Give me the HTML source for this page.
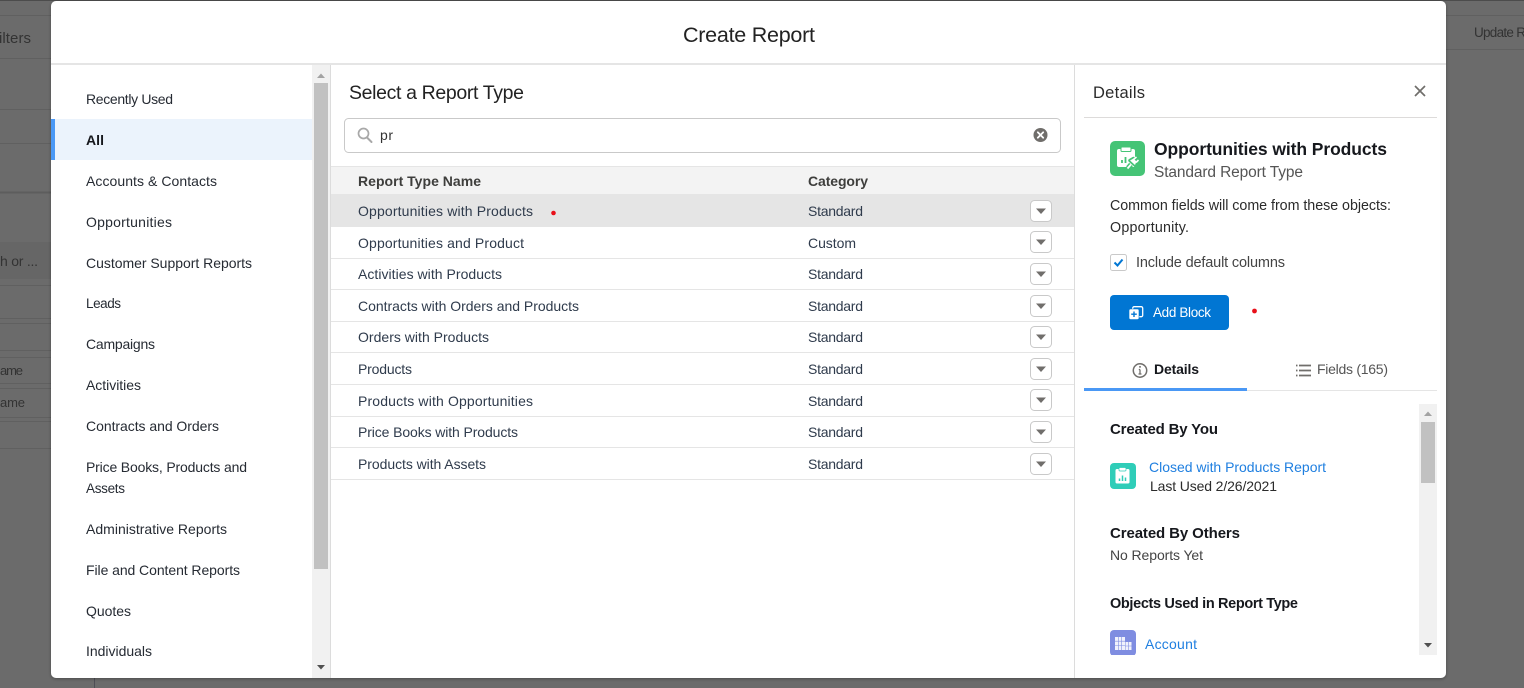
<!DOCTYPE html>
<html>
<head>
<meta charset="utf-8">
<title>Create Report</title>
<style>
html,body{margin:0;padding:0;width:1524px;height:688px;overflow:hidden;background:#6b6b6b}
svg{display:block}
text{font-family:"Liberation Sans",Arial,sans-serif;font-size:14px;fill:#2b2b2b;white-space:pre}
.b{font-weight:700}
.row{fill:#2f3b4c}
.nav{fill:#262b33}
.bg{fill:#333;font-size:14px}
.lnk{fill:#1f7fe0}
</style>
</head>
<body>
<svg width="1524" height="688" viewBox="0 0 1524 688" xmlns="http://www.w3.org/2000/svg">
<defs>
<clipPath id="acc"><rect x="1100" y="625" width="50" height="30"/></clipPath>
<filter id="sh" x="-5%" y="-5%" width="110%" height="110%"><feDropShadow dx="0" dy="1" stdDeviation="1.5" flood-color="#000" flood-opacity=".3"/></filter>
<g id="dd"><rect x=".5" y=".5" width="21" height="21" rx="4" fill="#fff" stroke="#c9c9c9"/><path d="M6 8.500h10l-5 5.500z" fill="#706e6b"/></g>
</defs>

<!-- dimmed background -->
<rect width="1524" height="688" fill="#6b6b6b"/>
<g stroke="#606060" stroke-width="1">
<path d="M0 15.500H51M0 58.500H51M0 109.500H51M0 143.500H51M0 285.500H51M0 318.500H51M0 323.500H51M0 350.500H51M0 357.500H51M0 383.500H51M0 388.500H51M0 417.500H51M0 421.500H51M0 448.500H51"/>
<path d="M1446 15.500H1524M1446 49.500H1524"/>
<path d="M94.500 678V688" stroke="#4e4e55"/>
</g>
<path d="M0 192.500H51" stroke="#5d5d5d" stroke-width="2"/>
<rect x="0" y="242" width="51" height="37" fill="#666"/>
<path d="M0 .5H1524" stroke="#4c4c4c"/>
<text class="bg" x="-1" y="43" textLength="32" style="font-size:15px">ilters</text>
<text class="bg" x="0" y="266" textLength="38">h or ...</text>
<text class="bg" x="0" y="375" textLength="23" style="font-size:13px">ame</text>
<text class="bg" x="0" y="407" textLength="25" style="font-size:13px">ame</text>
<text class="bg" x="1474" y="37" textLength="52" style="font-size:13.500px">Update R</text>

<!-- modal -->
<rect x="51" y="1" width="1395" height="677" rx="5" fill="#fff" filter="url(#sh)"/>
<rect x="51" y="63" width="1395" height="2" fill="#e5e5e5"/>
<text x="683" y="42" style="font-size:21.500px;fill:#222" textLength="132">Create Report</text>

<!-- sidebar -->
<rect x="51" y="119" width="261" height="41" fill="#ebf3fc"/>
<rect x="51" y="119" width="4" height="41" fill="#4a98f5"/>
<rect x="312" y="65" width="18" height="613" fill="#f1f1f1"/>
<rect x="314" y="83" width="14" height="486" fill="#c1c1c1"/>
<path d="M317 78h8l-4-4.500z" fill="#a3a3a3"/>
<path d="M317 665h8l-4 4.500z" fill="#505050"/>
<rect x="330" y="65" width="1" height="613" fill="#dcdcdc"/>
<text class="nav" x="86" y="104" textLength="87">Recently Used</text>
<text class="nav b" x="86" y="145" textLength="18" style="fill:#16181d">All</text>
<text class="nav" x="86" y="186" textLength="131">Accounts &amp; Contacts</text>
<text class="nav" x="86" y="227" textLength="86">Opportunities</text>
<text class="nav" x="86" y="268" textLength="166">Customer Support Reports</text>
<text class="nav" x="86" y="308" textLength="35" style="font-size:13.500px">Leads</text>
<text class="nav" x="86" y="349" textLength="69">Campaigns</text>
<text class="nav" x="86" y="390" textLength="55">Activities</text>
<text class="nav" x="86" y="431" textLength="133">Contracts and Orders</text>
<text class="nav" x="86" y="472" textLength="161">Price Books, Products and</text>
<text class="nav" x="86" y="493" textLength="39" style="font-size:13.500px">Assets</text>
<text class="nav" x="86" y="534" textLength="141">Administrative Reports</text>
<text class="nav" x="86" y="575" textLength="154">File and Content Reports</text>
<text class="nav" x="86" y="616" textLength="45">Quotes</text>
<text class="nav" x="86" y="656" textLength="66">Individuals</text>

<!-- middle -->
<rect x="1074" y="65" width="1" height="613" fill="#dcdcdc"/>
<text x="349" y="99" style="font-size:19.500px;fill:#222" textLength="175">Select a Report Type</text>
<rect x="344.500" y="118.500" width="716" height="34" rx="4" fill="#fff" stroke="#c9c9c9"/>
<circle cx="363.500" cy="133.500" r="5" fill="none" stroke="#a8a8a8" stroke-width="1.700"/>
<path d="M367 137.500l4.500 4.500" stroke="#a8a8a8" stroke-width="2" stroke-linecap="round"/>
<text x="380" y="140" textLength="13" style="fill:#333">pr</text>
<circle cx="1040.500" cy="135" r="7" fill="#706e6b"/>
<path d="M1037.800 132.300l5.400 5.400M1043.200 132.300l-5.400 5.400" stroke="#fff" stroke-width="1.800" stroke-linecap="round"/>

<rect x="331" y="166" width="743" height="28" fill="#f3f3f3"/>
<rect x="331" y="166" width="743" height="1" fill="#e5e5e5"/>
<rect x="331" y="194" width="743" height="33" fill="#e5e5e5"/>
<g fill="#e5e5e5">
<rect x="331" y="258" width="743" height="1"/><rect x="331" y="289" width="743" height="1"/>
<rect x="331" y="321" width="743" height="1"/><rect x="331" y="352" width="743" height="1"/>
<rect x="331" y="384" width="743" height="1"/><rect x="331" y="416" width="743" height="1"/>
<rect x="331" y="447" width="743" height="1"/><rect x="331" y="479" width="743" height="1"/>
</g>
<text class="b" x="358" y="186" textLength="123" style="fill:#3e3e3c">Report Type Name</text>
<text class="b" x="808" y="186" textLength="60" style="fill:#3e3e3c">Category</text>

<text class="row" x="358" y="216" textLength="175">Opportunities with Products</text>
<text class="row" x="358" y="248" textLength="166">Opportunities and Product</text>
<text class="row" x="358" y="279" textLength="144">Activities with Products</text>
<text class="row" x="358" y="311" textLength="221">Contracts with Orders and Products</text>
<text class="row" x="358" y="342" textLength="131">Orders with Products</text>
<text class="row" x="358" y="374" textLength="54">Products</text>
<text class="row" x="358" y="406" textLength="175">Products with Opportunities</text>
<text class="row" x="358" y="437" textLength="160">Price Books with Products</text>
<text class="row" x="358" y="469" textLength="128">Products with Assets</text>
<circle cx="553.500" cy="213" r="2.300" fill="#e8101a"/>

<text class="row" x="808" y="216" textLength="55">Standard</text>
<text class="row" x="808" y="248" textLength="48">Custom</text>
<text class="row" x="808" y="279" textLength="55">Standard</text>
<text class="row" x="808" y="311" textLength="55">Standard</text>
<text class="row" x="808" y="342" textLength="55">Standard</text>
<text class="row" x="808" y="374" textLength="55">Standard</text>
<text class="row" x="808" y="406" textLength="55">Standard</text>
<text class="row" x="808" y="437" textLength="55">Standard</text>
<text class="row" x="808" y="469" textLength="55">Standard</text>

<use href="#dd" x="1030" y="200"/><use href="#dd" x="1030" y="231"/><use href="#dd" x="1030" y="263"/>
<use href="#dd" x="1030" y="295"/><use href="#dd" x="1030" y="326"/><use href="#dd" x="1030" y="358"/>
<use href="#dd" x="1030" y="389"/><use href="#dd" x="1030" y="421"/><use href="#dd" x="1030" y="453"/>

<!-- details panel -->
<text x="1093" y="98" style="font-size:16.500px;fill:#2b2b2b" textLength="52">Details</text>
<path d="M1415 86l10 10M1425 86l-10 10" stroke="#706e6b" stroke-width="1.700"/>
<rect x="1084" y="117" width="353" height="1" fill="#dddbda"/>

<!-- green clipboard + plug icon -->
<rect x="1110" y="141" width="35" height="35" rx="5" fill="#45c476"/>
<rect x="1117" y="149" width="18" height="18" rx="2" fill="#fff"/>
<rect x="1121" y="147" width="10" height="4.500" rx="1" fill="#fff" stroke="#45c476" stroke-width="1"/>
<path d="M1122 163v-3M1125.500 163v-6" stroke="#45c476" stroke-width="1.800"/>
<path d="M1128 168l3-3.500" stroke="#45c476" stroke-width="5"/>
<path d="M1130 160.500l5 4.500 1.500-3.500-3-3z" fill="#fff" stroke="#45c476" stroke-width="3.500" stroke-linejoin="round"/>
<path d="M1130 160.500l5 4.500 1.500-3.500-3-3z" fill="#fff"/>
<path d="M1127.500 168.500l3.500-4" stroke="#fff" stroke-width="1.800"/>
<path d="M1133.500 159.500l3-2.500M1136 162.500l2.500-2.500" stroke="#fff" stroke-width="1.600"/>

<text class="b" x="1154" y="155" style="font-size:17.500px;fill:#16181d" textLength="233">Opportunities with Products</text>
<text x="1154" y="177" style="font-size:15.500px;fill:#555" textLength="149">Standard Report Type</text>
<text x="1110" y="210" textLength="281" style="font-size:14.300px;fill:#2b2b2b">Common fields will come from these objects:</text>
<text x="1110" y="232" textLength="79" style="font-size:14.300px;fill:#2b2b2b">Opportunity.</text>
<rect x="1110.500" y="254.500" width="16" height="16" rx="2" fill="#fff" stroke="#c9c9c9"/>
<path d="M1114.500 262.500l3 3 5-6" fill="none" stroke="#0176d3" stroke-width="2"/>
<text x="1136" y="267" textLength="149" style="font-size:14.500px;fill:#444">Include default columns</text>

<rect x="1110" y="295" width="119" height="35" rx="4" fill="#0176d3"/>
<rect x="1132.700" y="306.700" width="10" height="10" rx="1.500" fill="none" stroke="#fff" stroke-width="1.300"/>
<rect x="1129" y="309" width="10" height="10.500" rx="1.500" fill="#fff" stroke="#0176d3" stroke-width=".6"/>
<path d="M1134 311.500v5.500M1131.200 314.200h5.600" stroke="#0176d3" stroke-width="1.400"/>
<text x="1153" y="317" style="font-size:13.500px;fill:#fff" textLength="58">Add Block</text>
<circle cx="1254.500" cy="311" r="2.400" fill="#e8101a"/>

<rect x="1084" y="390" width="353" height="1" fill="#e5e5e5"/>
<rect x="1084" y="388" width="163" height="3" fill="#4a98f5"/>
<circle cx="1140" cy="370.500" r="6.700" fill="none" stroke="#706e6b" stroke-width="1.500"/>
<path d="M1140 369.500v4.500M1138.800 369.500h1.200M1138.500 374h3" stroke="#706e6b" stroke-width="1.300" fill="none"/>
<rect x="1139.200" y="366" width="1.600" height="1.700" fill="#706e6b"/>
<text class="b" x="1154" y="374" textLength="45" style="fill:#16181d">Details</text>
<path d="M1299 365.500h12M1299 370.500h12M1299 375.500h12" stroke="#706e6b" stroke-width="1.700"/>
<path d="M1296 365.500h1.500M1296 370.500h1.500M1296 375.500h1.500" stroke="#706e6b" stroke-width="1.700"/>
<text x="1317" y="374" textLength="71" style="fill:#555">Fields (165)</text>

<rect x="1419" y="404" width="18" height="251" fill="#f1f1f1"/>
<rect x="1421" y="422" width="14" height="61" fill="#c1c1c1"/>
<path d="M1424 416h8l-4-4.500z" fill="#a3a3a3"/>
<path d="M1424 643h8l-4 4.500z" fill="#505050"/>

<text class="b" x="1110" y="434" style="font-size:15px;fill:#16181d" textLength="108">Created By You</text>
<rect x="1110" y="463" width="26" height="26" rx="4" fill="#2fcdb8"/>
<rect x="1115.500" y="469" width="14" height="14.500" rx="1.500" fill="#fff"/>
<rect x="1119" y="467.500" width="7" height="3.500" rx="1" fill="#fff" stroke="#2fcdb8" stroke-width=".7"/>
<path d="M1119.500 481v-2.500M1122.500 481v-5.500M1125.500 481v-3.500" stroke="#2fcdb8" stroke-width="1.500"/>
<text class="lnk" x="1149" y="472" textLength="177">Closed with Products Report</text>
<text x="1150" y="491" textLength="127" style="fill:#2b2b2b">Last Used 2/26/2021</text>
<text class="b" x="1110" y="538" style="font-size:15px;fill:#16181d" textLength="130">Created By Others</text>
<text x="1110" y="560" textLength="93" style="fill:#444">No Reports Yet</text>
<text class="b" x="1110" y="608" textLength="188" style="font-size:14.500px;fill:#16181d">Objects Used in Report Type</text>
<g clip-path="url(#acc)">
<rect x="1110" y="630" width="26" height="26" rx="4" fill="#7f8de1"/>
<rect x="1115" y="637" width="10" height="13" fill="#f0f2fc"/>
<rect x="1125.500" y="642" width="6" height="8" fill="#f0f2fc"/>
<path d="M1118.300 637v13M1121.700 637v13M1115 641.200h10M1115 645.500h10M1128.500 642v8M1125.500 646h6" stroke="#7f8de1" stroke-width=".6"/>
</g>
<text class="lnk" x="1145" y="649" textLength="52">Account</text>
</svg>
</body>
</html>
